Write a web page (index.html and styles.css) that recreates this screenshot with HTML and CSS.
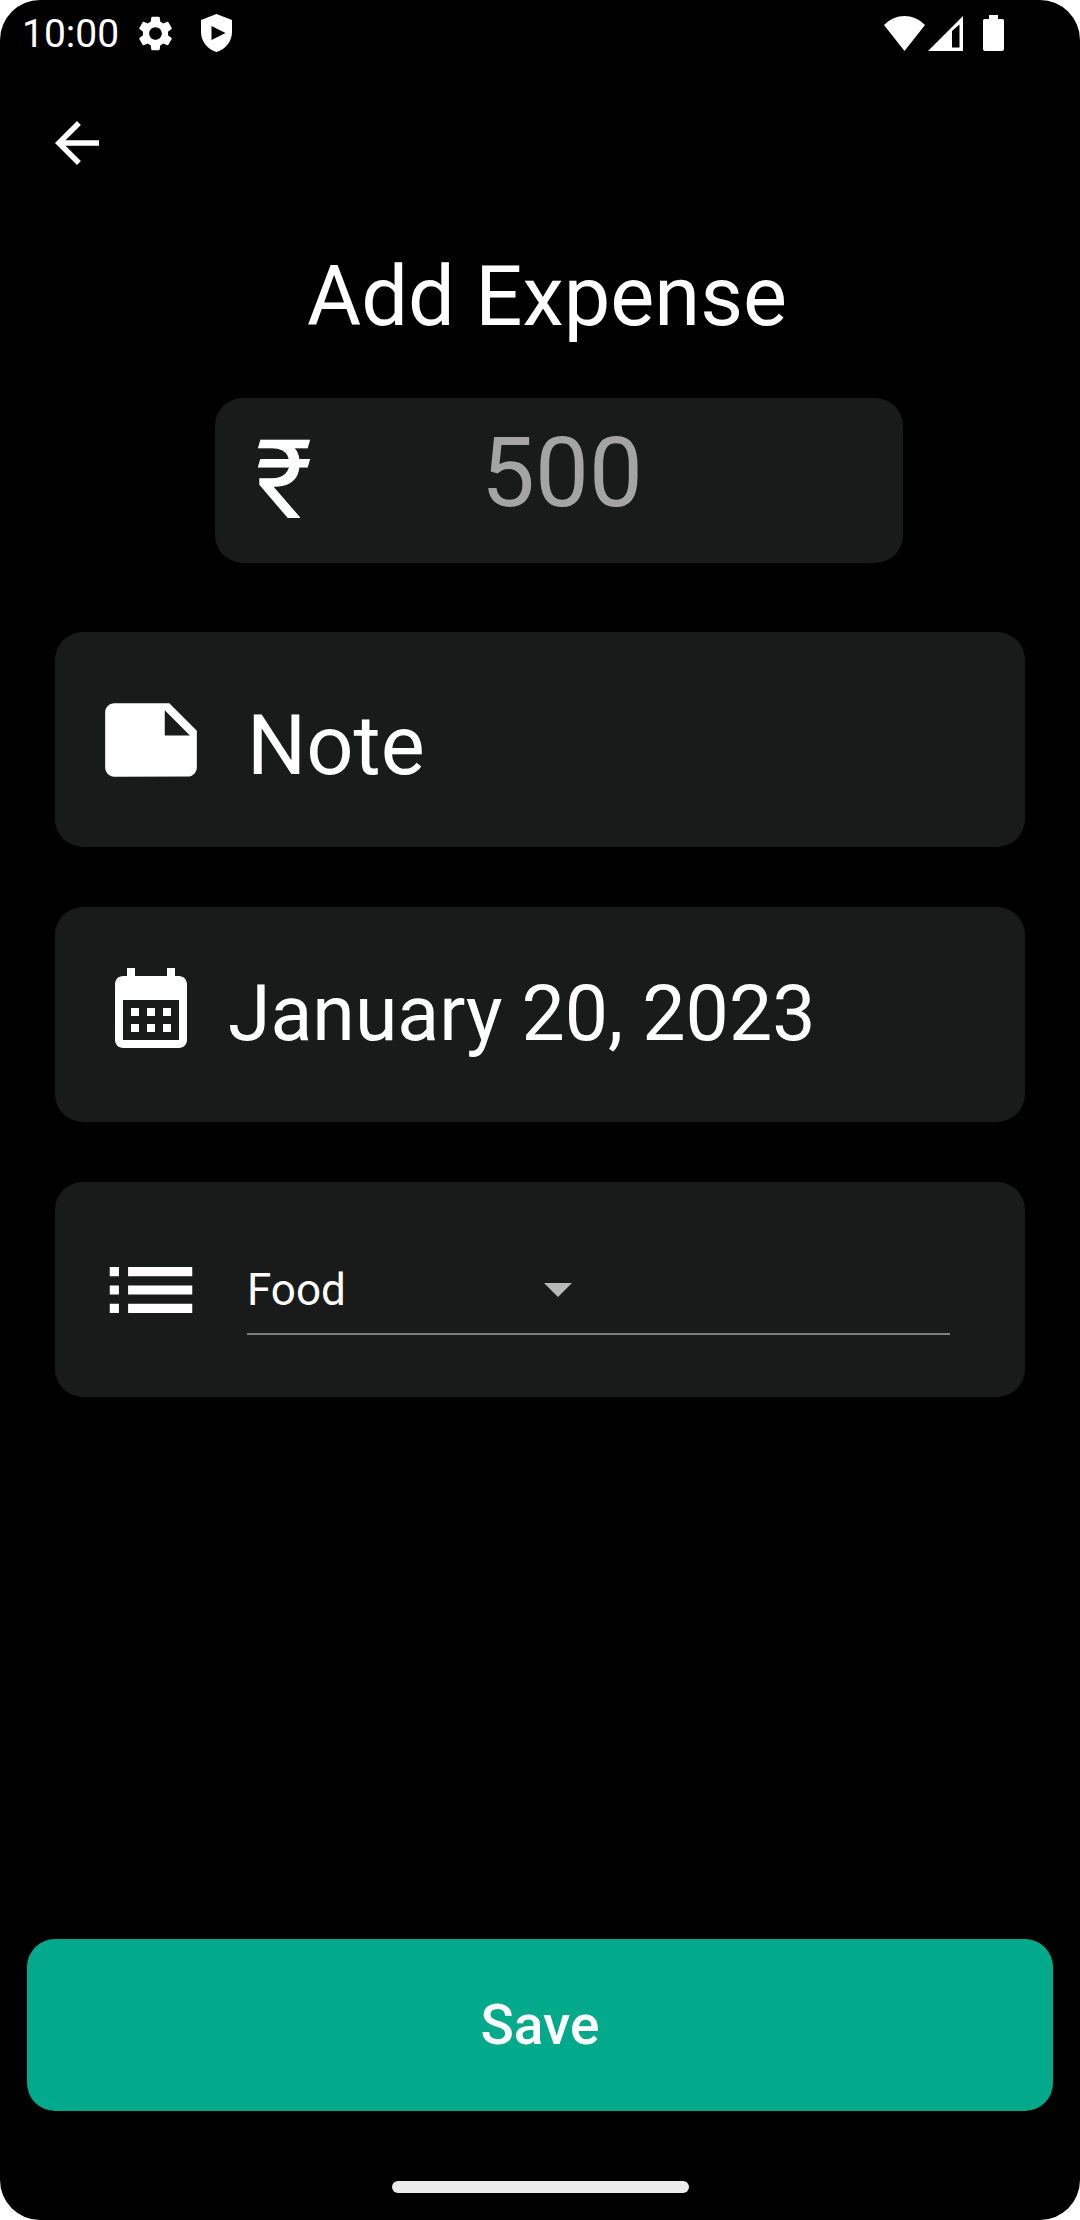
FILE: index.html
```html
<!DOCTYPE html>
<html lang="en">
<head>
<meta charset="utf-8">
<meta name="viewport" content="width=device-width, initial-scale=1">
<title>Add Expense</title>
<link rel="stylesheet" href="styles.css">
</head>
<body>
<div class="screen">
  <header class="status-bar">
    <time class="clock">10:00</time>
    <svg class="gear" viewBox="2 2 20 20" aria-hidden="true"><path d="M19.14 12.94c.04-.3.06-.61.06-.94 0-.32-.02-.64-.07-.94l2.03-1.58c.18-.14.23-.41.12-.61l-1.92-3.32c-.12-.22-.37-.29-.59-.22l-2.39.96c-.5-.38-1.03-.7-1.62-.94l-.36-2.54c-.04-.24-.24-.41-.48-.41h-3.84c-.24 0-.43.17-.47.41l-.36 2.54c-.59.24-1.13.57-1.62.94l-2.39-.96c-.22-.08-.47 0-.59.22L2.74 8.87c-.12.21-.08.47.12.61l2.03 1.58c-.05.3-.09.63-.09.94s.02.64.07.94l-2.03 1.58c-.18.14-.23.41-.12.61l1.92 3.32c.12.22.37.29.59.22l2.39-.96c.5.38 1.03.7 1.62.94l.36 2.54c.05.24.24.41.48.41h3.84c.24 0 .44-.17.47-.41l.36-2.54c.59-.24 1.13-.56 1.62-.94l2.39.96c.22.08.47 0 .59-.22l1.92-3.32c.12-.22.07-.47-.12-.61l-2.01-1.58zM12 15.6c-1.98 0-3.6-1.62-3.6-3.6s1.62-3.6 3.6-3.6 3.6 1.62 3.6 3.6-1.62 3.6-3.6 3.6z"/></svg>
    <svg class="shield" viewBox="0 0 31 38" aria-hidden="true"><path fill-rule="evenodd" d="M15.500 0L31 6V18C31 27 25 35 15.500 38C6 35 0 27 0 18V6ZM10.500 12V26L24.500 19Z"/></svg>
    <svg class="wifi" viewBox="0 0 41 35" aria-hidden="true"><path d="M0 9C12-3 29-3 41 9L20.500 35Z"/></svg>
    <svg class="signal" viewBox="0 0 35 35" aria-hidden="true"><path fill-rule="evenodd" d="M35 0V35H0ZM24 15V31.500H31.500V8.500Z"/></svg>
    <svg class="battery" viewBox="0 0 21 36" aria-hidden="true"><path d="M6 0H15V4H19.500Q21 4 21 5.500V34Q21 36 19 36H2Q0 36 0 34V5.500Q0 4 1.500 4H6Z"/></svg>
  </header>

  <nav class="toolbar">
    <button class="back" type="button" aria-label="Back">
      <svg viewBox="0 0 24 24" aria-hidden="true"><path d="M20 11H7.830l5.590-5.590L12 4l-8 8 8 8 1.410-1.410L7.830 13H20v-2z"/></svg>
    </button>
  </nav>

  <form class="form">
    <h1 class="title">Add Expense</h1>

    <div class="amount">
      <label class="currency" for="amount">₹</label>
      <input class="amount-input" id="amount" type="text" inputmode="decimal" placeholder="500">
    </div>

    <div class="card">
      <label class="card-icon" for="note" aria-label="Note">
        <svg class="icon" viewBox="0 0 24 24" aria-hidden="true"><path d="M22 10l-6-6H4c-1.100 0-2 .9-2 2v12.010c0 1.100.9 1.990 2 1.990l16-.010c1.100 0 2-.890 2-1.990v-8zm-7-4.500l5.500 5.500H15V5.500z"/></svg>
      </label>
      <input class="note-input" id="note" type="text" placeholder="Note">
    </div>

    <div class="card card-date">
      <label class="card-icon" for="date" aria-label="Date">
        <svg class="icon icon-small" viewBox="0 0 24 24" aria-hidden="true"><path d="M19 4h-1V2h-2v2H8V2H6v2H5c-1.110 0-1.990.9-1.990 2L3 20c0 1.100.89 2 2 2h14c1.100 0 2-.9 2-2V6c0-1.100-.9-2-2-2zm0 16H5V10h14v10zM9 14H7v-2h2v2zm4 0h-2v-2h2v2zm4 0h-2v-2h2v2zm-8 4H7v-2h2v2zm4 0h-2v-2h2v2zm4 0h-2v-2h2v2z"/></svg>
      </label>
      <input class="date-input" id="date" type="text" value="January 20, 2023" readonly>
    </div>

    <div class="card">
      <label class="card-icon" for="category" aria-label="Category">
        <svg class="icon" viewBox="0 0 24 24" aria-hidden="true"><path d="M3 13h2v-2H3v2zm0 4h2v-2H3v2zm0-8h2V7H3v2zm4 4h14v-2H7v2zm0 4h14v-2H7v2zM7 7v2h14V7H7z"/></svg>
      </label>
      <div class="category">
        <div class="spinner">
          <select class="category-select" id="category">
            <option selected>Food</option>
            <option>Travel</option>
            <option>Shopping</option>
            <option>Other</option>
          </select>
          <svg class="caret" viewBox="0 0 28 14" aria-hidden="true"><path d="M0 0H28L14 14Z"/></svg>
        </div>
      </div>
    </div>

    <button class="save" type="submit">Save</button>
  </form>

  <div class="home-bar"></div>
</div>
</body>
</html>
```
FILE: styles.css
```css
* {
  box-sizing: border-box;
}

body {
  margin: 0;
  background: #fff;
  color: #fff;
  font-family: Roboto, "Noto Sans", sans-serif;
}

svg {
  display: block;
  flex: none;
  fill: currentColor;
}

button,
input,
select {
  margin: 0;
  padding: 0;
  border: 0;
  background: none;
  color: inherit;
  font: inherit;
}

.screen {
  display: flex;
  flex-direction: column;
  min-height: 100vh;
  padding-bottom: 27px;
  border-radius: 40px;
  background: #000;
}

.status-bar {
  display: flex;
  align-items: center;
  height: 66px;
  padding: 0 76px 0 22px;
}

.clock {
  margin-right: 19px;
  padding-top: 2px;
  font-size: 39px;
  line-height: 48px;
}

.gear {
  width: 35px;
  height: 35px;
}

.shield {
  width: 31px;
  height: 38px;
  margin-left: 28px;
}

.wifi {
  width: 41px;
  height: 35px;
  margin-left: auto;
}

.signal {
  width: 35px;
  height: 35px;
  margin-left: 3px;
}

.battery {
  width: 21px;
  height: 36px;
  margin-left: 20px;
}

.toolbar {
  display: flex;
  padding: 44px 44px 0;
}

.back {
  width: 66px;
  height: 66px;
}

.form {
  display: flex;
  flex: 1;
  flex-direction: column;
  gap: 60px;
  padding: 72px 55px 70px;
}

.title {
  margin: 0 0 -8px 14px;
  font-size: 83px;
  font-weight: 400;
  line-height: 98px;
  text-align: center;
}

.amount {
  display: flex;
  align-items: center;
  align-self: center;
  width: 688px;
  max-width: 100%;
  height: 165px;
  margin: 0 0 9px 37px;
  padding: 0 91px 0 41px;
  border-radius: 28px;
  background: #191b1a;
}

.currency {
  font-size: 110px;
  line-height: 128px;
}

.amount-input {
  flex: 1;
  min-width: 0;
  height: 128px;
  padding-bottom: 16px;
  font-size: 96px;
  text-align: center;
}

.amount-input::placeholder {
  color: #a3a4a3;
  opacity: 1;
}

.card {
  display: flex;
  align-items: center;
  min-height: 215px;
  padding: 0 75px 0 41px;
  border-radius: 28px;
  background: #191b1a;
}

.card-icon {
  display: flex;
  flex: none;
  justify-content: center;
  width: 110px;
}

.icon {
  width: 110px;
  height: 110px;
}

.icon-small {
  width: 96px;
  height: 96px;
}

.note-input,
.date-input {
  flex: 1;
  min-width: 0;
  height: 110px;
  padding-top: 12px;
}

.note-input {
  margin-left: 41px;
  font-size: 83px;
}

.note-input::placeholder {
  color: #fff;
  opacity: 1;
}

.card-date {
  padding-bottom: 14px;
}

.date-input {
  margin-left: 22px;
  font-size: 77px;
}

.category {
  flex: 1;
  min-width: 0;
  margin-left: 41px;
  padding: 12px 0 10px;
  border-bottom: 2px solid #7d7e7e;
}

.spinner {
  display: grid;
  align-items: center;
  width: 325px;
  max-width: 100%;
}

.category-select {
  grid-area: 1 / 1;
  width: 100%;
  height: 66px;
  appearance: none;
  font-size: 44px;
}

.category-select option {
  color: #000;
}

.caret {
  grid-area: 1 / 1;
  justify-self: end;
  width: 28px;
  height: 14px;
  color: #b8b9b8;
  pointer-events: none;
}

.save {
  height: 172px;
  margin: auto -28px 0;
  border-radius: 28px;
  background: #03a98b;
  font-size: 55px;
  font-weight: 500;
}

.home-bar {
  align-self: center;
  width: 297px;
  height: 12px;
  border-radius: 6px;
  background: #ebebeb;
}
```
